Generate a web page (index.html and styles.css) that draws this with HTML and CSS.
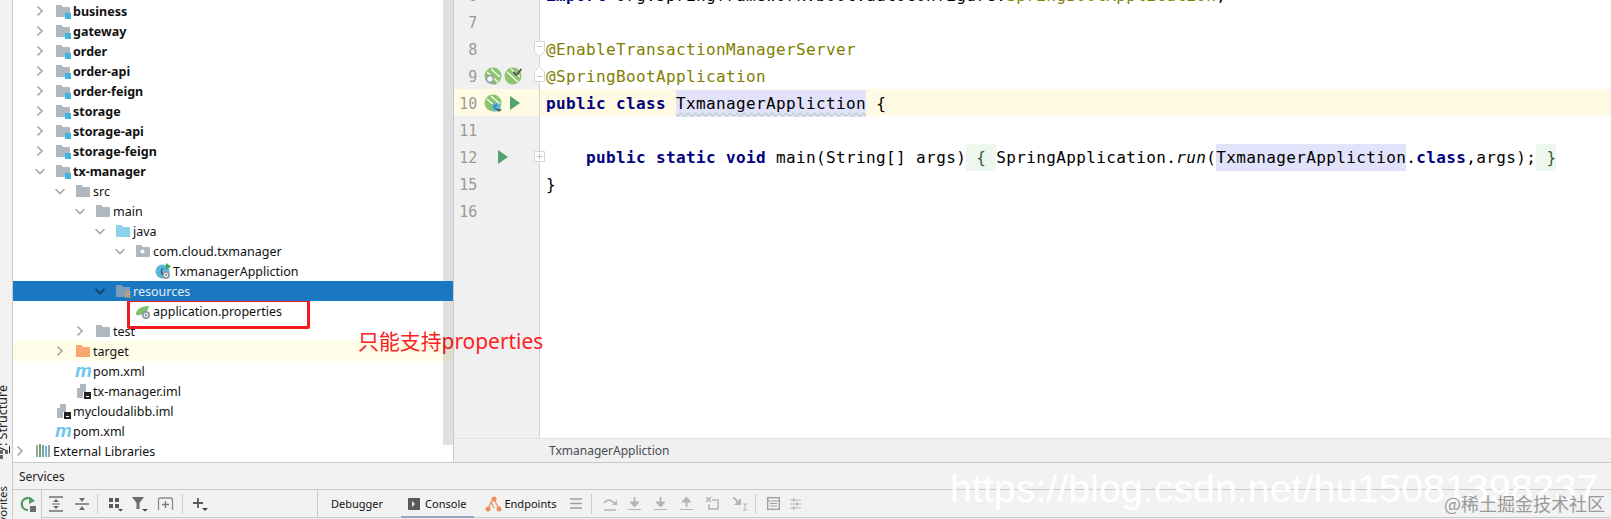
FILE: index.html
```html
<!DOCTYPE html>
<html lang="en">
<head>
<meta charset="utf-8">
<title>TxmanagerAppliction</title>
<link rel="stylesheet" href="styles.css">
</head>
<body>
<svg class="defs" width="0" height="0" aria-hidden="true">
  <defs>
    <symbol id="chev-r" viewBox="0 0 12 12"><path d="M3.5 1.5 8 6 3.5 10.500" fill="none" stroke="#a9a9a9" stroke-width="1.7"/></symbol>
    <symbol id="chev-d" viewBox="0 0 12 12"><path d="M1.500 4 6 8.500 10.500 4" fill="none" stroke="#a9a9a9" stroke-width="1.700"/></symbol>
    <symbol id="folder" viewBox="0 0 16 16"><path d="M1 2h5.500l1.500 2h7v10H1z" fill="#afb8bf"/></symbol>
    <symbol id="module" viewBox="0 0 16 16"><path d="M1 2h5.500l1.500 2h7v10H1z" fill="#afb8bf"/><rect x="10" y="10" width="6" height="6" fill="#fff"/><rect x="10" y="10" width="6" height="6" fill="#3db6e6"/></symbol>
    <symbol id="java" viewBox="0 0 16 16"><path d="M1 2h5.500l1.500 2h7v10H1z" fill="#8ed3ee"/></symbol>
    <symbol id="package" viewBox="0 0 16 16"><path d="M1 2h5.500l1.500 2h7v10H1z" fill="#afb8bf"/><circle cx="7.500" cy="8.500" r="2" fill="#fff"/></symbol>
    <symbol id="target" viewBox="0 0 16 16"><path d="M1 2h5.500l1.500 2h7v10H1z" fill="#f7a872"/></symbol>
    <symbol id="resources" viewBox="0 0 16 16"><path d="M1 2h5.500l1.500 2h7v10H1z" fill="#7d9dbb"/><path d="M10 9h6M10 11.500h6M10 14h6" stroke="#f0a53c" stroke-width="1.200"/></symbol>
    <symbol id="class-run" viewBox="0 0 16 16"><circle cx="7.500" cy="8.500" r="7" fill="#5bb6de"/><path d="M11 0l5 3.500L11 7z" fill="#3fa64a"/><circle cx="11" cy="12" r="4" fill="#8c98a2"/><circle cx="11" cy="12" r="1.800" fill="none" stroke="#fff"/><path d="M8 5.500a3.500 3.500 0 0 0 0 6" fill="none" stroke="#33566b" stroke-width="1.300"/></symbol>
    <symbol id="spring-props" viewBox="0 0 16 16"><path d="M1 11C1 6 7 3 14 3c-1 6-5 8-9 9-2 .5-4 .5-4-1z" fill="#7fbf6a"/><circle cx="11" cy="12" r="4" fill="#8c98a2"/><circle cx="11" cy="12" r="1.800" fill="none" stroke="#fff"/></symbol>
    <symbol id="iml" viewBox="0 0 16 16"><path d="M5 1h5v4h-2v3H2V5h3z" fill="#afb8bf"/><path d="M2 5h6v10H2z" fill="#afb8bf"/><path d="M6 1h5v8H6z" fill="#afb8bf"/><rect x="9" y="9" width="7" height="7" fill="#222"/><rect x="11" y="13" width="3" height="1" fill="#fff"/></symbol>
    <symbol id="libs" viewBox="0 0 16 16"><rect x="1" y="2" width="2" height="12" fill="#9aa4ac"/><rect x="4" y="1" width="2" height="13" fill="#62ad53"/><rect x="7" y="2" width="2" height="12" fill="#8d9aa3"/><rect x="10" y="3" width="2" height="11" fill="#62b8e0"/><rect x="13" y="2" width="2" height="12" fill="#9aa4ac"/></symbol>
    <symbol id="spring" viewBox="0 0 18 18"><circle cx="9" cy="9" r="8.500" fill="#8dc46e"/><path d="M3 5l11 10M7 2l9 8" stroke="#fff" stroke-width="1.200" fill="none"/></symbol>
    <symbol id="play" viewBox="0 0 10 14"><path d="M0 0l10 7-10 7z" fill="#50a46c"/></symbol>
  </defs>
</svg>

<div class="ide">
  <aside class="strip">
    <span class="vlabel vlabel-structure"><u>7</u>: Structure</span>
    <span class="strip-icon"><i></i><i></i><i></i></span>
    <span class="vlabel vlabel-fav">2: Favorites</span>
  </aside>

  <div class="main">
    <div class="workspace">
      <div class="tree">
        <div class="scrollbar"></div>
        <div class="row d1 bold"><svg class="chev"><use href="#chev-r"/></svg><svg class="ico"><use href="#module"/></svg><span>business</span></div>
        <div class="row d1 bold"><svg class="chev"><use href="#chev-r"/></svg><svg class="ico"><use href="#module"/></svg><span>gateway</span></div>
        <div class="row d1 bold"><svg class="chev"><use href="#chev-r"/></svg><svg class="ico"><use href="#module"/></svg><span>order</span></div>
        <div class="row d1 bold"><svg class="chev"><use href="#chev-r"/></svg><svg class="ico"><use href="#module"/></svg><span>order-api</span></div>
        <div class="row d1 bold"><svg class="chev"><use href="#chev-r"/></svg><svg class="ico"><use href="#module"/></svg><span>order-feign</span></div>
        <div class="row d1 bold"><svg class="chev"><use href="#chev-r"/></svg><svg class="ico"><use href="#module"/></svg><span>storage</span></div>
        <div class="row d1 bold"><svg class="chev"><use href="#chev-r"/></svg><svg class="ico"><use href="#module"/></svg><span>storage-api</span></div>
        <div class="row d1 bold"><svg class="chev"><use href="#chev-r"/></svg><svg class="ico"><use href="#module"/></svg><span>storage-feign</span></div>
        <div class="row d1 bold"><svg class="chev"><use href="#chev-d"/></svg><svg class="ico"><use href="#module"/></svg><span>tx-manager</span></div>
        <div class="row d2"><svg class="chev"><use href="#chev-d"/></svg><svg class="ico"><use href="#folder"/></svg><span>src</span></div>
        <div class="row d3"><svg class="chev"><use href="#chev-d"/></svg><svg class="ico"><use href="#folder"/></svg><span>main</span></div>
        <div class="row d4"><svg class="chev"><use href="#chev-d"/></svg><svg class="ico"><use href="#java"/></svg><span>java</span></div>
        <div class="row d5"><svg class="chev"><use href="#chev-d"/></svg><svg class="ico"><use href="#package"/></svg><span>com.cloud.txmanager</span></div>
        <div class="row d6"><span class="chev"></span><svg class="ico"><use href="#class-run"/></svg><span>TxmanagerAppliction</span></div>
        <div class="row d4 selected"><svg class="chev"><path d="M1.500 4 6 8.500 10.500 4" fill="none" stroke="#12466f" stroke-width="2"/></svg><svg class="ico"><use href="#resources"/></svg><span>resources</span></div>
        <div class="row d5"><span class="chev"></span><svg class="ico"><use href="#spring-props"/></svg><span>application.properties</span></div>
        <div class="row d3"><svg class="chev"><use href="#chev-r"/></svg><svg class="ico"><use href="#folder"/></svg><span>test</span></div>
        <div class="row d2 excluded"><svg class="chev"><use href="#chev-r"/></svg><svg class="ico"><use href="#target"/></svg><span>target</span></div>
        <div class="row d2"><span class="chev"></span><svg class="ico"><text class="maven" x="0" y="14">m</text></svg><span>pom.xml</span></div>
        <div class="row d2"><span class="chev"></span><svg class="ico"><use href="#iml"/></svg><span>tx-manager.iml</span></div>
        <div class="row d1"><span class="chev"></span><svg class="ico"><use href="#iml"/></svg><span>mycloudalibb.iml</span></div>
        <div class="row d1"><span class="chev"></span><svg class="ico"><text class="maven" x="0" y="14">m</text></svg><span>pom.xml</span></div>
        <div class="row d0"><svg class="chev"><use href="#chev-r"/></svg><svg class="ico"><use href="#libs"/></svg><span>External Libraries</span></div>
      </div>

      <div class="editor-col">
        <div class="editor">
          <div class="gutter">
            <div class="gline"><span class="num">6</span></div>
            <div class="gline"><span class="num">7</span></div>
            <div class="gline"><span class="num">8</span><svg class="fold" viewBox="0 0 11 16"><path d="M.5.500h10v10l-5 5-5-5z" fill="#fff" stroke="#d5d5d5"/><path d="M3 5.500h5" stroke="#c4c4c4"/></svg></div>
            <div class="gline"><span class="num">9</span>
              <svg class="gico"><use href="#spring"/><circle cx="6" cy="12" r="3.500" fill="#f0f0f0" stroke="#8d9aa8" stroke-width="1.500"/><path d="M8.500 14.500l3 3" stroke="#8d9aa8" stroke-width="1.500"/></svg>
              <svg class="gico"><use href="#spring"/><path d="M9.500 5l3 3 5-6" fill="none" stroke="#505050" stroke-width="1.800"/></svg>
              <svg class="fold fold-up" viewBox="0 0 11 16"><path d="M.5 15.500h10v-10l-5-5-5 5z" fill="#fff" stroke="#d5d5d5"/><path d="M3 10.500h5" stroke="#c4c4c4"/></svg>
            </div>
            <div class="gline current"><span class="num">10</span>
              <svg class="gico"><use href="#spring"/><circle cx="12" cy="13" r="4.500" fill="#5cb9d8"/><path d="M13.500 11.500a2 2 0 1 0 0 3" fill="none" stroke="#33566b"/><path d="M12 15h6l-3 3z" fill="#555"/></svg>
              <svg class="play play-class"><use href="#play"/></svg>
            </div>
            <div class="gline"><span class="num">11</span></div>
            <div class="gline"><span class="num">12</span><svg class="play play-main"><use href="#play"/></svg><svg class="fold fold-plus" viewBox="0 0 11 11"><path d="M.5.500h10v10H.5z" fill="#fff" stroke="#d5d5d5"/><path d="M2.500 5.500h6M5.500 2.500v6" stroke="#c4c4c4"/></svg></div>
            <div class="gline"><span class="num">15</span></div>
            <div class="gline"><span class="num">16</span></div>
          </div>
          <div class="code">
            <div class="cline"><span class="kw">import</span> org.springframework.boot.autoconfigure.<span class="ann">SpringBootApplication</span>;</div>
            <div class="cline"></div>
            <div class="cline ann">@EnableTransactionManagerServer</div>
            <div class="cline ann">@SpringBootApplication</div>
            <div class="cline current"><span class="kw">public class</span> <span class="hl squiggle">TxmanagerAppliction</span> {</div>
            <div class="cline"></div>
            <div class="cline">    <span class="kw">public static void</span> main(String[] args)<span class="foldtext"> { </span>SpringApplication.<em>run</em>(<span class="hl">TxmanagerAppliction</span>.<span class="kw">class</span>,args);<span class="foldtext"> }</span></div>
            <div class="cline">}</div>
            <div class="cline"></div>
          </div>
        </div>
        <div class="crumb">TxmanagerAppliction</div>
      </div>
    </div>

    <div class="services-title">Services</div>

    <div class="toolbar">
      <div class="tb-left">
        <svg class="tb" width="16" height="16" viewBox="0 0 16 16"><path d="M13 5A6 6 0 1 0 8 14" fill="none" stroke="#4f9e5f" stroke-width="2.200"/><path d="M9 1l6 4-6 3z" fill="#4f9e5f"/><rect x="10" y="10" width="6" height="6" fill="#6e6e6e"/></svg>
      </div>
      <div class="tb-mid">
        <svg class="tb tb-wide" width="14" height="16" viewBox="0 0 14 16"><path d="M0 1h14M0 15h14" stroke="#6e6e6e" stroke-width="1.500"/><path d="M7 3l3 3H4zM7 13l3-3H4z" fill="#6e6e6e"/><path d="M3 8h8" stroke="#6e6e6e"/></svg>
        <svg class="tb tb-wide" width="14" height="16" viewBox="0 0 14 16"><path d="M0 8h14" stroke="#6e6e6e" stroke-width="1.500"/><path d="M7 6l3-4H4zM7 10l3 4H4z" fill="#6e6e6e"/></svg>
        <i class="sep sep-first"></i>
        <svg class="tb" width="15" height="16" viewBox="0 0 15 16"><path d="M1 2h4v4H1zM7 2h4v4H7zM1 8h4v4H1zM7 8h4v4H7z" fill="#5a5a5a"/><path d="M10 13h5l-2.500 2.500z" fill="#444"/></svg>
        <svg class="tb" width="16" height="16" viewBox="0 0 16 16"><path d="M0 1h12L7.500 7v6H4.500V7z" fill="#6e6e6e"/><path d="M10 13h6l-3 2.500z" fill="#444"/></svg>
        <svg class="tb" width="17" height="16" viewBox="0 0 17 16"><path d="M1.500 14V4q0-2 2-2h10q2 0 2 2v10" fill="none" stroke="#8a8a8a" stroke-width="1.300"/><path d="M8.500 5v7M5 8.500h7" stroke="#777" stroke-width="1.300"/></svg>
        <i class="sep sep-second"></i>
        <svg class="tb" width="15" height="16" viewBox="0 0 15 16"><path d="M5 2v10M0 7h10" stroke="#5a5a5a" stroke-width="1.800"/><path d="M9 12h6l-3 3z" fill="#444"/></svg>
      </div>
      <div class="tb-right">
        <span class="tab tab-debugger">Debugger</span>
        <span class="tab tab-console"><svg width="12" height="12" viewBox="0 0 12 12"><rect width="12" height="12" fill="#5a5a5a"/><path d="M4 3l3 3-3 3z" fill="#e8e8e8"/></svg>Console</span>
        <span class="tab tab-endpoints"><svg width="17" height="16" viewBox="0 0 17 16"><circle cx="3" cy="13" r="2.500" fill="#ee8f5c"/><circle cx="9" cy="3" r="2.500" fill="#ee8f5c"/><circle cx="14" cy="13" r="2.500" fill="#ee8f5c"/><path d="M3 13l3-7 3-3 5 10M6 6l3 6" fill="none" stroke="#ee8f5c" stroke-width="1.200"/></svg>Endpoints</span>
        <svg class="tb tb-menu" width="12" height="11" viewBox="0 0 12 11"><path d="M0 1h12M0 5.500h12M0 10h12" stroke="#a0a0a0" stroke-width="1.700"/></svg>
        <i class="sep sep-a"></i>
        <svg class="dim step1" width="16" height="14" viewBox="0 0 16 14"><path d="M2 6q5-6 10 0" fill="none" stroke="#b4b4b4" stroke-width="1.600"/><path d="M15 3v5h-5z" fill="#b4b4b4"/><path d="M2 13h12" stroke="#b4b4b4" stroke-width="1.500"/></svg>
        <svg class="dim step2" width="13" height="14" viewBox="0 0 13 14"><path d="M6.500 0v7" stroke="#b4b4b4" stroke-width="1.800"/><path d="M2 5h9L6.500 10zM0 12.500h13" fill="#b4b4b4" stroke="#b4b4b4"/></svg>
        <svg class="dim step3" width="13" height="14" viewBox="0 0 13 14"><path d="M6.500 0v7" stroke="#b4b4b4" stroke-width="1.800"/><path d="M2 5h9L6.500 10zM0 12.500h13" fill="#b4b4b4" stroke="#b4b4b4"/></svg>
        <svg class="dim step4" width="13" height="14" viewBox="0 0 13 14"><path d="M6.500 3v7" stroke="#b4b4b4" stroke-width="1.800"/><path d="M2 5h9L6.500 0zM0 12.500h13" fill="#b4b4b4" stroke="#b4b4b4"/></svg>
        <svg class="dim step5" width="13" height="14" viewBox="0 0 13 14"><path d="M0 0l5 5M5 0L0 5" stroke="#b4b4b4" stroke-width="1.500"/><path d="M6 3h6v9H3V7" fill="none" stroke="#b4b4b4" stroke-width="1.500"/></svg>
        <svg class="dim step6" width="15" height="14" viewBox="0 0 15 14"><path d="M0 0l6 6" stroke="#b4b4b4" stroke-width="1.800"/><path d="M8 1v7H1z" fill="#b4b4b4"/><path d="M10 7h4M12 7v6M10 13h4" stroke="#b4b4b4"/></svg>
        <i class="sep sep-b"></i>
        <svg class="dim calc" width="13" height="13" viewBox="0 0 13 13"><rect x=".7" y=".7" width="11.600" height="11.600" fill="none" stroke="#a0a0a0" stroke-width="1.400"/><path d="M1 4h11M3 6.500h7M3 9h7" stroke="#a0a0a0" stroke-width="1.200"/></svg>
        <svg class="dim last" width="11" height="12" viewBox="0 0 11 12"><path d="M0 2h11M0 6h11M0 10h11M4 0v4M7 4v4M4 8v4" stroke="#b4b4b4" stroke-width="1.200"/></svg>
      </div>
    </div>
  </div>
</div>

<div class="redbox"></div>
<div class="note">只能支持properties</div>
<div class="wm-url">https://blog.csdn.net/hu15081398237</div>
<div class="wm-site">@稀土掘金技术社区</div>
</body>
</html>
```

FILE: styles.css
```css
* { box-sizing: border-box; }
html, body { margin: 0; padding: 0; height: 519px; overflow: hidden; background: #f2f2f2; }
body { position: relative; font-family: "Noto Sans", "Noto Sans CJK SC", sans-serif; }
.defs { position: absolute; }

.ide { display: flex; width: 1611px; height: 519px; overflow: hidden; }

/* left tool strip */
.strip { position: relative; flex: 0 0 13px; background: #f2f2f2; border-right: 1px solid #c9c9c9; overflow: hidden; }
.vlabel { position: absolute; writing-mode: vertical-rl; transform: rotate(180deg); font-size: 12.500px; line-height: 12px; color: #222; white-space: nowrap; }
.vlabel-structure { left: -3px; top: 385px; }
.vlabel-fav { left: -3px; top: 486px; font-size: 11.500px; }
.strip-icon { position: absolute; left: 0; top: 450px; width: 8px; display: grid; grid-template-columns: 4px 4px; gap: 1px; }
.strip-icon i { width: 3px; height: 4px; background: #666; }

.main { flex: 1; display: flex; flex-direction: column; min-width: 0; }
.workspace { display: flex; height: 462px; flex: none; }

/* project tree */
.tree { position: relative; flex: 0 0 441px; padding-top: 1px; background: #fff; border-right: 1px solid #c9c9c9; overflow: hidden; }
.row { position: relative; display: flex; align-items: center; height: 20px; font-size: 12.500px; color: #111; white-space: nowrap; }
.bold { font-weight: 700; }
.d0 { padding-left: 1px; }
.d1 { padding-left: 21px; }
.d2 { padding-left: 41px; }
.d3 { padding-left: 61px; }
.d4 { padding-left: 81px; }
.d5 { padding-left: 101px; }
.d6 { padding-left: 121px; }
.chev { flex: none; width: 12px; height: 12px; margin-right: 9px; display: block; }
.ico { flex: none; width: 16px; height: 16px; margin-right: 2px; display: block; }
.selected { z-index: 2; background: #1a78c2; color: #e4eef6; }
.excluded { background: #fffde8; }
.scrollbar { position: absolute; z-index: 1; top: 0; right: 0; width: 10px; height: 445px; background: rgba(0, 0, 0, .12); }
.maven { font: italic 700 19px "Liberation Sans", sans-serif; fill: #6cc6ee; }

/* editor */
.editor-col { flex: 1; display: flex; flex-direction: column; min-width: 0; }
.editor { flex: 0 0 438px; display: flex; overflow: hidden; background: #fff; }
.gutter { flex: 0 0 86px; margin-top: -19px; background: #f0f0f0; border-right: 1px solid #d5d5d5; }
.gline { position: relative; display: flex; align-items: center; height: 27px; }
.num { flex: 0 0 23px; padding-top: 2px; text-align: right; font: 15px "DejaVu Sans Mono", monospace; letter-spacing: -.2px; color: #999; }
.gico { flex: none; width: 18px; height: 18px; margin-left: 7px; display: block; }
.gico + .gico { margin-left: 2px; }
.play { flex: none; width: 10px; height: 14px; display: block; }
.play-class { margin-left: 8px; }
.play-main { margin-left: 21px; }
.fold { position: absolute; left: 80px; top: 6px; width: 11px; height: 16px; }
.fold-up { top: 4px; }
.fold-plus { top: 8px; height: 11px; }
.current { background: #fffae3; }

.code { flex: 1; margin-top: -19px; font: 16px "DejaVu Sans Mono", monospace; letter-spacing: .37px; color: #000; }
.cline { height: 27px; line-height: 29px; padding-left: 6px; white-space: pre; }
.kw { color: #000080; font-weight: 700; }
.ann { color: #808000; }
.hl { display: inline-block; line-height: 27px; background: #e2e2fa; }
.squiggle { text-decoration: underline wavy #9ec79e 1px; text-underline-offset: 3px; }
.foldtext { display: inline-block; line-height: 27px; background: #edf7ed; color: #3c5a3c; }
em { font-style: italic; }

.crumb { flex: 1; padding-left: 95px; background: #f0f0f0; border-top: 1px solid #e4e4e4; font-size: 12px; line-height: 23px; color: #4a4a55; }

/* services */
.services-title { flex: none; height: 28px; padding-left: 6px; background: #f2f2f2; border-top: 1px solid #c9c9c9; border-bottom: 1px solid #c9c9c9; font-size: 12px; line-height: 27px; color: #222; }
.toolbar { flex: 1; display: flex; background: #f2f2f2; }
.tb-left { flex: 0 0 29px; padding: 6px 0 0 7px; border-right: 1px solid #c9c9c9; }
.tb-mid, .tb-right { height: 28px; border-bottom: 1px solid #c9c9c9; display: flex; align-items: center; }
.tb-mid { flex: 0 0 276px; padding-left: 7px; border-right: 1px solid #c9c9c9; }
.tb-right { flex: 1; position: relative; font-size: 11px; color: #111; }
.tb { display: block; flex: none; }
.tb-mid .tb { margin-right: 9px; }
.tb-mid .tb-wide { margin-right: 12px; }
.sep { flex: none; display: block; width: 1px; height: 20px; background: #cfcfcf; }
.sep-first { margin: 0 10px 0 -4px; }
.sep-second { margin: 0 10px 0 -1px; }
.tab { display: flex; align-items: center; gap: 5px; height: 27px; white-space: nowrap; }
.tab-debugger { margin-left: 13px; }
.tab-console { margin-left: 25px; position: relative; }
.tab-endpoints { margin-left: 19px; gap: 2px; }
.tab-console::after { content: ""; position: absolute; left: -7px; right: -8px; bottom: -1px; height: 2px; background: #98a4bd; }
.tb-menu { margin-left: 14px; }
.dim { flex: none; display: block; }
.sep-a { margin-left: 9px; }
.step1 { margin-left: 10px; }
.step2 { margin-left: 10px; }
.step3, .step4, .step5 { margin-left: 13px; }
.step6 { margin-left: 14px; }
.sep-b { margin-left: 7px; }
.calc { margin-left: 11px; }
.last { margin-left: 10px; }

/* annotations over the screenshot */
.redbox { position: absolute; left: 127px; top: 299px; width: 183px; height: 30px; border: 3px solid #f5191f; border-radius: 2px; }
.note { position: absolute; left: 358px; top: 326px; font-size: 20.900px; line-height: 30px; color: #fb2222; white-space: nowrap; }
.wm-url { position: absolute; left: 950px; top: 465px; font: 39.400px/46px "Liberation Sans", sans-serif; color: #fff; white-space: nowrap; }
.wm-site { position: absolute; left: 1444px; top: 491px; font: 18px/24px "Noto Sans CJK SC", sans-serif; color: #999; white-space: nowrap; }
```
